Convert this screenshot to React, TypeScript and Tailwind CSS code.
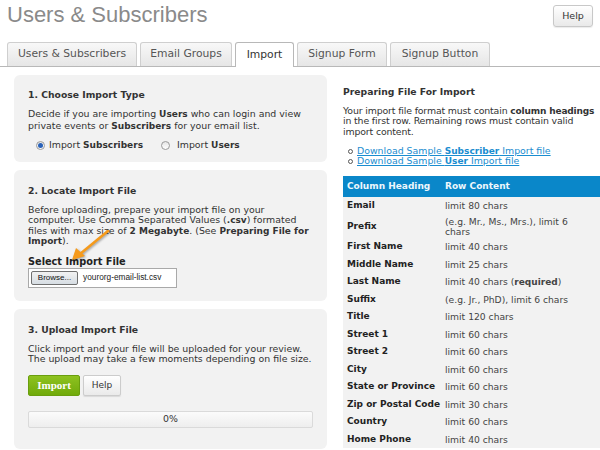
import React from "react";

const B = ({ children }: { children: React.ReactNode }) => (
  <b className="font-bold text-[9px]">{children}</b>
);

const rows: [string, React.ReactNode, boolean?][] = [
  ["Email", "limit 80 chars"],
  ["Prefix", <>(e.g. Mr., Ms., Mrs.), limit 6<br />chars</>, true],
  ["First Name", "limit 40 chars"],
  ["Middle Name", "limit 25 chars"],
  ["Last Name", <>limit 40 chars (<B>required</B>)</>],
  ["Suffix", "(e.g. Jr., PhD), limit 6 chars"],
  ["Title", "limit 120 chars"],
  ["Street 1", "limit 60 chars"],
  ["Street 2", "limit 60 chars"],
  ["City", "limit 60 chars"],
  ["State or Province", "limit 60 chars"],
  ["Zip or Postal Code", "limit 30 chars"],
  ["Country", "limit 60 chars"],
  ["Home Phone", "limit 40 chars"],
];

const tabs = [
  { label: "Users & Subscribers", w: "w-[130px]" },
  { label: "Email Groups", w: "w-[92px]" },
  { label: "Import", w: "w-[59px]", active: true },
  { label: "Signup Form", w: "w-[90px]" },
  { label: "Signup Button", w: "w-[100px]" },
];

function Radio({ checked }: { checked?: boolean }) {
  return (
    <span className="flex h-[9px] w-[9px] items-center justify-center rounded-full border border-[#9a9a9a] bg-gradient-to-b from-[#e6e6e6] to-white">
      {checked && <span className="h-[5px] w-[5px] rounded-full bg-[#2a62b8]" />}
    </span>
  );
}

export default function App() {
  return (
    <div
      className="relative h-[450px] w-[600px] overflow-hidden bg-white text-[#333] text-[9.4px]"
      style={{ fontFamily: '"DejaVu Sans", Verdana, sans-serif' }}
    >
      {/* header */}
      <div className="flex h-[42px] items-start justify-between pl-[7px] pr-[7px] pt-[4px]">
        <div
          className="text-[22px] leading-[22px] text-[#8a8a8a]"
          style={{ fontFamily: '"Liberation Sans", Arial, sans-serif' }}
        >
          Users &amp; Subscribers
        </div>
        <button className="mt-[1px] flex h-[22px] w-[40px] items-center justify-center rounded-[3px] border border-[#c8c8c8] bg-gradient-to-b from-white to-[#e9e9e9] text-[9.5px] text-[#333] shadow-[0_1px_1px_rgba(0,0,0,0.08)]">
          Help
        </button>
      </div>

      {/* tabs */}
      <div className="flex h-[25px] items-end gap-[3px] border-b border-[#b8b8b8] pl-[7px]">
        {tabs.map((t) =>
          t.active ? (
            <div
              key={t.label}
              className={`${t.w} mb-[-1px] flex h-[25px] items-center justify-center rounded-t-[3px] border border-b-0 border-[#b8b8b8] bg-white text-[10.75px] text-[#333]`}
            >
              {t.label}
            </div>
          ) : (
            <div
              key={t.label}
              className={`${t.w} flex h-[24px] items-center justify-center rounded-t-[3px] border border-b-0 border-[#cfcfcf] bg-gradient-to-b from-[#f8f8f8] to-[#e6e6e6] text-[10.75px] text-[#555]`}
            >
              {t.label}
            </div>
          )
        )}
      </div>

      {/* body */}
      <div className="flex pt-[8px]">
        {/* left column */}
        <div className="ml-[14px] flex w-[313px] flex-col gap-[8px]">
          {/* panel 1 */}
          <div className="h-[87px] rounded-[6px] bg-[#f2f2f2] px-[14px] pt-[14px]">
            <div className="text-[9.25px] font-bold leading-[12px]">1. Choose Import Type</div>
            <div className="mt-[7px] whitespace-nowrap leading-[11px]">
              Decide if you are importing <B>Users</B> who can login and view
              <br />
              private events or <B>Subscribers</B> for your email list.
            </div>
            <div className="mt-[7px] flex h-[12px] items-center whitespace-nowrap">
              <span className="ml-[8px]">
                <Radio checked />
              </span>
              <span className="ml-[4px]">
                Import <B>Subscribers</B>
              </span>
              <span className="ml-[18px]">
                <Radio />
              </span>
              <span className="ml-[7px]">
                Import <B>Users</B>
              </span>
            </div>
          </div>

          {/* panel 2 */}
          <div className="h-[131px] rounded-[6px] bg-[#f2f2f2] px-[14px] pt-[15px]">
            <div className="text-[9.25px] font-bold leading-[12px]">2. Locate Import File</div>
            <div className="mt-[8px] whitespace-nowrap leading-[10.4px]">
              Before uploading, prepare your import file on your
              <br />
              computer. Use Comma Separated Values (<B>.csv</B>) formated
              <br />
              files with max size of <B>2 Megabyte</B>. (See <B>Preparing File for</B>
              <br />
              <B>Import</B>).
            </div>
            <div className="mt-[9px] text-[9.75px] font-bold leading-[12px] text-[#222]">
              Select Import File
            </div>
            <div className="flex h-[20px] w-[149px] items-center border border-[#a9a9a9] bg-white pl-[2px]">
              <div
                className="flex h-[14px] w-[47px] items-center justify-center rounded-[2px] border border-[#707070] bg-gradient-to-b from-[#f2f2f2] to-[#d6dde3] text-[8px] text-[#111]"
                style={{ fontFamily: '"Liberation Sans", Arial, sans-serif' }}
              >
                Browse...
              </div>
              <span
                className="ml-[5px] text-[8.3px] text-[#222]"
                style={{ fontFamily: '"Liberation Sans", Arial, sans-serif' }}
              >
                yourorg-email-list.csv
              </span>
            </div>
          </div>

          {/* panel 3 */}
          <div className="h-[140px] rounded-[6px] bg-[#f2f2f2] px-[14px] pt-[15px]">
            <div className="text-[9.25px] font-bold leading-[12px]">3. Upload Import File</div>
            <div className="mt-[8px] whitespace-nowrap leading-[10.4px]">
              Click import and your file will be uploaded for your review.
              <br />
              The upload may take a few moments depending on file size.
            </div>
            <div className="mt-[10px] flex gap-[3px]">
              <button
                className="flex h-[21px] w-[52px] items-center justify-center rounded-[2px] border border-[#6a9e0e] bg-gradient-to-b from-[#8ec21f] to-[#70aa0a] text-[11px] font-bold text-white"
                style={{ fontFamily: '"Liberation Serif", Georgia, serif' }}
              >
                Import
              </button>
              <button className="flex h-[21px] w-[38px] items-center justify-center rounded-[2px] border border-[#cccccc] bg-gradient-to-b from-white to-[#eaeaea] text-[9px] text-[#333] shadow-[0_1px_1px_rgba(0,0,0,0.1)]">
                Help
              </button>
            </div>
            <div className="mt-[15px] flex h-[17px] w-[285px] items-center justify-center rounded-[2px] border border-[#dadada] bg-gradient-to-b from-[#fbfbfb] to-[#eeeeee] text-[9.4px]">
              0%
            </div>
          </div>
        </div>

        {/* right column */}
        <div className="ml-[16px] min-w-0 flex-1 pt-[11px]">
          <div className="text-[9.25px] font-bold leading-[12px]">Preparing File For Import</div>
          <div className="mt-[8px] whitespace-nowrap leading-[10.3px] tracking-[-0.15px]">
            Your import file format must contain <B>column headings</B>
            <br />
            in the first row. Remaining rows must contain valid
            <br />
            import content.
          </div>
          <ul className="mt-[9px] whitespace-nowrap leading-[10.3px] text-[#1a8dd0]">
            <li className="flex items-center">
              <span className="ml-[5px] mr-[4px] h-[5px] w-[5px] rounded-full border border-[#555]" />
              <span className="underline">
                Download Sample <B>Subscriber</B> Import file
              </span>
            </li>
            <li className="flex items-center">
              <span className="ml-[5px] mr-[4px] h-[5px] w-[5px] rounded-full border border-[#555]" />
              <span className="underline">
                Download Sample <B>User</B> Import file
              </span>
            </li>
          </ul>

          <div className="mt-[10px] w-[257px] bg-[#f2f2f2]">
            <div className="flex h-[21px] items-center bg-[#0a87c9] text-[9px] font-bold text-[#eef7fc]">
              <div className="w-[102px] pl-[4px]">Column Heading</div>
              <div>Row Content</div>
            </div>
            {rows.map(([label, value, tall]) => (
              <div
                key={label}
                className={`flex items-center ${tall ? "h-[23.5px]" : "h-[17.5px]"}`}
              >
                <div className="w-[102px] whitespace-nowrap pl-[4px] text-[9px] font-bold text-[#222]">
                  {label}
                </div>
                <div
                  className={`whitespace-nowrap text-[9.2px] text-[#444] ${tall ? "leading-[10px]" : "leading-[12px]"}`}
                >
                  {value}
                </div>
              </div>
            ))}
          </div>
        </div>
      </div>

      {/* orange arrow annotation */}
      <svg
        className="absolute left-[60px] top-[222px] drop-shadow-[1px_1px_1px_rgba(0,0,0,0.35)]"
        width="56"
        height="46"
        viewBox="0 0 56 46"
      >
        <line x1="48" y1="9" x2="20" y2="32" stroke="#f59a1b" strokeWidth="2.5" strokeLinecap="round" />
        <polygon points="12,38 16,26 25,34" fill="#f59a1b" />
      </svg>
    </div>
  );
}
